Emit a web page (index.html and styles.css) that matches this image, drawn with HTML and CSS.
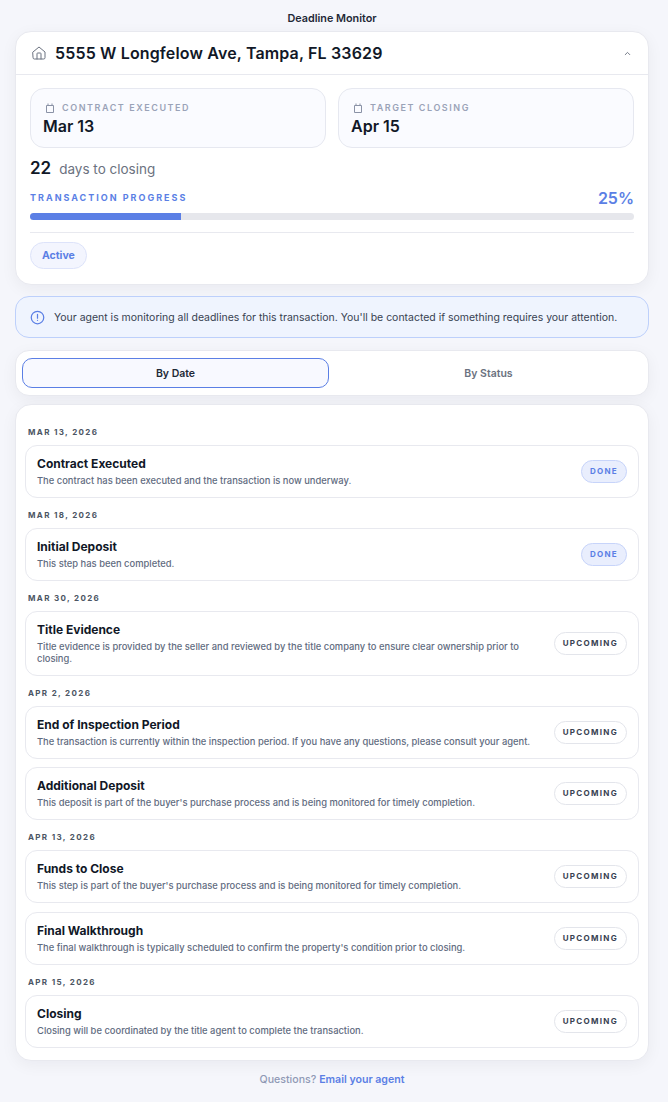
FILE: index.html
```html
<!DOCTYPE html>
<html lang="en">
<head>
    <meta charset="UTF-8">
    <meta name="viewport" content="width=device-width, initial-scale=1.0">
    <title>Deadline Monitor</title>
    <link rel="stylesheet" href="styles.css">
</head>
<body>
    <h1 class="page-title">Deadline Monitor</h1>

    <!-- Property summary -->
    <section class="card summary">
        <div class="summary-head">
            <svg class="home-icon" viewBox="0 0 24 24" width="16" height="16" fill="none" stroke="currentColor" stroke-width="1.5" stroke-linecap="round" stroke-linejoin="round"><path d="M3 10.5 12 3l9 7.5V19a2 2 0 0 1-2 2H5a2 2 0 0 1-2-2z"/><path d="M9 21v-8a1 1 0 0 1 1-1h4a1 1 0 0 1 1 1v8"/></svg>
            <h2 class="address">5555 W Longfelow Ave, Tampa, FL 33629</h2>
            <svg class="chevron" viewBox="0 0 24 24" width="9" height="9" fill="none" stroke="currentColor" stroke-width="2.5" stroke-linecap="round" stroke-linejoin="round"><path d="m6 15 6-6 6 6"/></svg>
        </div>
        <div class="summary-body">
            <div class="date-boxes">
                <div class="date-box">
                    <div class="date-label">
                        <svg viewBox="0 0 10 10" width="10" height="10" fill="none" stroke="currentColor" stroke-width="1"><path d="M1.5 2.5h7v7h-7z"/><path d="M3 .5v2M7 .5v2"/></svg>
                        CONTRACT EXECUTED
                    </div>
                    <div class="date-value">Mar 13</div>
                </div>
                <div class="date-box">
                    <div class="date-label">
                        <svg viewBox="0 0 10 10" width="10" height="10" fill="none" stroke="currentColor" stroke-width="1"><path d="M1.5 2.5h7v7h-7z"/><path d="M3 .5v2M7 .5v2"/></svg>
                        TARGET CLOSING
                    </div>
                    <div class="date-value">Apr 15</div>
                </div>
            </div>
            <div class="countdown"><strong>22</strong><span>days to closing</span></div>
            <div class="progress-head">
                <span class="progress-label">TRANSACTION PROGRESS</span>
                <span class="progress-pct">25%</span>
            </div>
            <div class="progress-track"><div class="progress-fill" style="width: 25%"></div></div>
            <div class="summary-foot"><span class="active-pill">Active</span></div>
        </div>
    </section>

    <!-- Notice -->
    <div class="notice">
        <svg viewBox="0 0 24 24" width="15" height="15" fill="none" stroke="currentColor" stroke-width="2" stroke-linecap="round"><circle cx="12" cy="12" r="10"/><path d="M12 7v6M12 16.5h.01"/></svg>
        <p>Your agent is monitoring all deadlines for this transaction. You'll be contacted if something requires your attention.</p>
    </div>

    <!-- Tabs -->
    <div class="card tabs">
        <button class="tab tab-active">By Date</button>
        <button class="tab">By Status</button>
    </div>

    <!-- Timeline -->
    <section class="card timeline">
        <h3 class="group-date">MAR 13, 2026</h3>
        <div class="item">
            <div class="item-text">
                <h4>Contract Executed</h4>
                <p>The contract has been executed and the transaction is now underway.</p>
            </div>
            <span class="badge badge-done">DONE</span>
        </div>

        <h3 class="group-date">MAR 18, 2026</h3>
        <div class="item">
            <div class="item-text">
                <h4>Initial Deposit</h4>
                <p>This step has been completed.</p>
            </div>
            <span class="badge badge-done">DONE</span>
        </div>

        <h3 class="group-date">MAR 30, 2026</h3>
        <div class="item">
            <div class="item-text">
                <h4>Title Evidence</h4>
                <p>Title evidence is provided by the seller and reviewed by the title company to ensure clear ownership prior to closing.</p>
            </div>
            <span class="badge">UPCOMING</span>
        </div>

        <h3 class="group-date">APR 2, 2026</h3>
        <div class="item">
            <div class="item-text">
                <h4>End of Inspection Period</h4>
                <p>The transaction is currently within the inspection period. If you have any questions, please consult your agent.</p>
            </div>
            <span class="badge">UPCOMING</span>
        </div>
        <div class="item">
            <div class="item-text">
                <h4>Additional Deposit</h4>
                <p>This deposit is part of the buyer's purchase process and is being monitored for timely completion.</p>
            </div>
            <span class="badge">UPCOMING</span>
        </div>

        <h3 class="group-date">APR 13, 2026</h3>
        <div class="item">
            <div class="item-text">
                <h4>Funds to Close</h4>
                <p>This step is part of the buyer's purchase process and is being monitored for timely completion.</p>
            </div>
            <span class="badge">UPCOMING</span>
        </div>
        <div class="item">
            <div class="item-text">
                <h4>Final Walkthrough</h4>
                <p>The final walkthrough is typically scheduled to confirm the property's condition prior to closing.</p>
            </div>
            <span class="badge">UPCOMING</span>
        </div>

        <h3 class="group-date">APR 15, 2026</h3>
        <div class="item">
            <div class="item-text">
                <h4>Closing</h4>
                <p>Closing will be coordinated by the title agent to complete the transaction.</p>
            </div>
            <span class="badge">UPCOMING</span>
        </div>
    </section>

    <p class="page-foot">Questions? <a href="#">Email your agent</a></p>
</body>
</html>
```

FILE: styles.css
```css
* {
    box-sizing: border-box;
    margin: 0;
    padding: 0;
}
body {
    background-color: #f5f6fb;
    font-family: Inter, "Noto Sans", sans-serif;
    color: #111827;
    padding: 12px 19px 0 15px;
    height: 1102px;
    overflow: hidden;
}
.page-title {
    text-align: center;
    font-size: 10.8px;
    line-height: 13px;
    font-weight: 600;
    margin-bottom: 6px;
    color: #1f2937;
}
.card {
    background: white;
    border: 1px solid #e8e9ef;
    border-radius: 16px;
    box-shadow: 0 4px 16px rgba(17, 24, 39, 0.05);
}

/* Property summary */
.summary-head {
    display: flex;
    align-items: center;
    height: 43px;
    padding: 0 15px;
    border-bottom: 1px solid #e8e9ef;
}
.home-icon {
    color: #6b7280;
    margin-right: 8px;
}
.address {
    flex: 1;
    font-size: 16px;
    font-weight: 600;
    letter-spacing: 0.15px;
}
.chevron {
    color: #6b7280;
    margin-right: 1px;
}
.summary-body {
    padding: 13px 14px 15px;
}
.date-boxes {
    display: grid;
    grid-template-columns: 1fr 1fr;
    gap: 12px;
}
.date-box {
    height: 60px;
    padding: 13px 12px 0;
    background: #fafbff;
    border: 1px solid #e6e8f0;
    border-radius: 14px;
}
.date-label {
    display: flex;
    align-items: center;
    gap: 7px;
    padding-left: 2px;
    font-size: 9px;
    line-height: 11px;
    font-weight: 600;
    letter-spacing: 1.55px;
    color: #9aa3b8;
}
.date-label svg {
    color: #8a92a6;
}
.date-value {
    font-size: 16px;
    line-height: 19px;
    font-weight: 600;
    margin-top: 4px;
}
.countdown {
    display: flex;
    align-items: baseline;
    gap: 8px;
    margin-top: 10px;
    height: 22px;
}
.countdown strong {
    font-size: 17px;
    font-weight: 600;
}
.countdown span {
    font-size: 13.5px;
    color: #6b7280;
}
.progress-head {
    display: flex;
    justify-content: space-between;
    align-items: center;
    margin-top: 7px;
    height: 21px;
}
.progress-label {
    font-size: 9px;
    font-weight: 700;
    letter-spacing: 2px;
    color: #5b7fe5;
}
.progress-pct {
    font-size: 16px;
    font-weight: 600;
    color: #5b7fe5;
}
.progress-track {
    height: 7px;
    margin-top: 5px;
    background: #e6e7ec;
    border-radius: 4px;
    overflow: hidden;
}
.progress-fill {
    height: 100%;
    background: #5b7fe5;
}
.summary-foot {
    margin-top: 12px;
    padding-top: 9px;
    border-top: 1px solid #e8e9ef;
}
.active-pill {
    display: inline-block;
    padding: 0 11px;
    height: 27px;
    line-height: 25px;
    font-size: 10.5px;
    font-weight: 700;
    color: #5b7fe5;
    background: #f3f5fe;
    border: 1px solid #dde3fa;
    border-radius: 14px;
}

/* Notice */
.notice {
    display: flex;
    align-items: center;
    gap: 9px;
    height: 42px;
    margin-top: 11px;
    padding: 0 14px;
    color: #5b7fe5;
    background: #eff4fe;
    border: 1px solid #bdd0fb;
    border-radius: 14px;
}
.notice p {
    font-size: 10.48px;
    color: #374151;
    white-space: nowrap;
}

/* Tabs */
.tabs {
    display: grid;
    grid-template-columns: 1fr 1fr;
    gap: 6px;
    height: 46px;
    margin-top: 12px;
    padding: 7px 6px;
    border-radius: 14px;
}
.tab {
    font-family: inherit;
    font-size: 10.5px;
    font-weight: 600;
    color: #6b7280;
    background: none;
    border: 1px solid transparent;
    border-radius: 10px;
}
.tab-active {
    color: #1f2937;
    background: #f8f9ff;
    border-color: #5b7fe5;
}

/* Timeline */
.timeline {
    margin-top: 8px;
    padding: 9px 9px 12px;
}
.group-date {
    font-size: 8px;
    line-height: 10px;
    font-weight: 700;
    letter-spacing: 1.35px;
    color: #4b5563;
    margin: 13px 0 8px 3px;
}
.item {
    display: flex;
    align-items: center;
    justify-content: space-between;
    gap: 16px;
    padding: 10px 11px 10px;
    margin-bottom: 8.4px;
    border: 1px solid #e8e9ef;
    border-radius: 12px;
}
.item:last-child {
    margin-bottom: 0;
}
.item + .group-date {
    margin-top: 12px;
}
.item-text h4 {
    font-size: 12px;
    line-height: 16px;
    font-weight: 700;
    color: #111827;
}
.item-text p {
    font-size: 9.4px;
    line-height: 12px;
    margin-top: 3px;
    font-weight: 500;
    color: #5f6b80;
}
.badge {
    flex-shrink: 0;
    height: 23px;
    line-height: 21px;
    padding: 0 8px;
    font-size: 8px;
    font-weight: 700;
    letter-spacing: 1.3px;
    color: #374151;
    background: white;
    border: 1px solid #e3e5eb;
    border-radius: 12px;
}
.badge-done {
    color: #5b7fe5;
    background: #e9eefd;
    border-color: #c7d4fa;
}

.page-foot {
    text-align: center;
    font-size: 10.6px;
    margin-top: 12px;
    font-weight: 500;
    color: #8f99b5;
}
.page-foot a {
    color: #5b7fe5;
    font-weight: 600;
    text-decoration: none;
}
```
